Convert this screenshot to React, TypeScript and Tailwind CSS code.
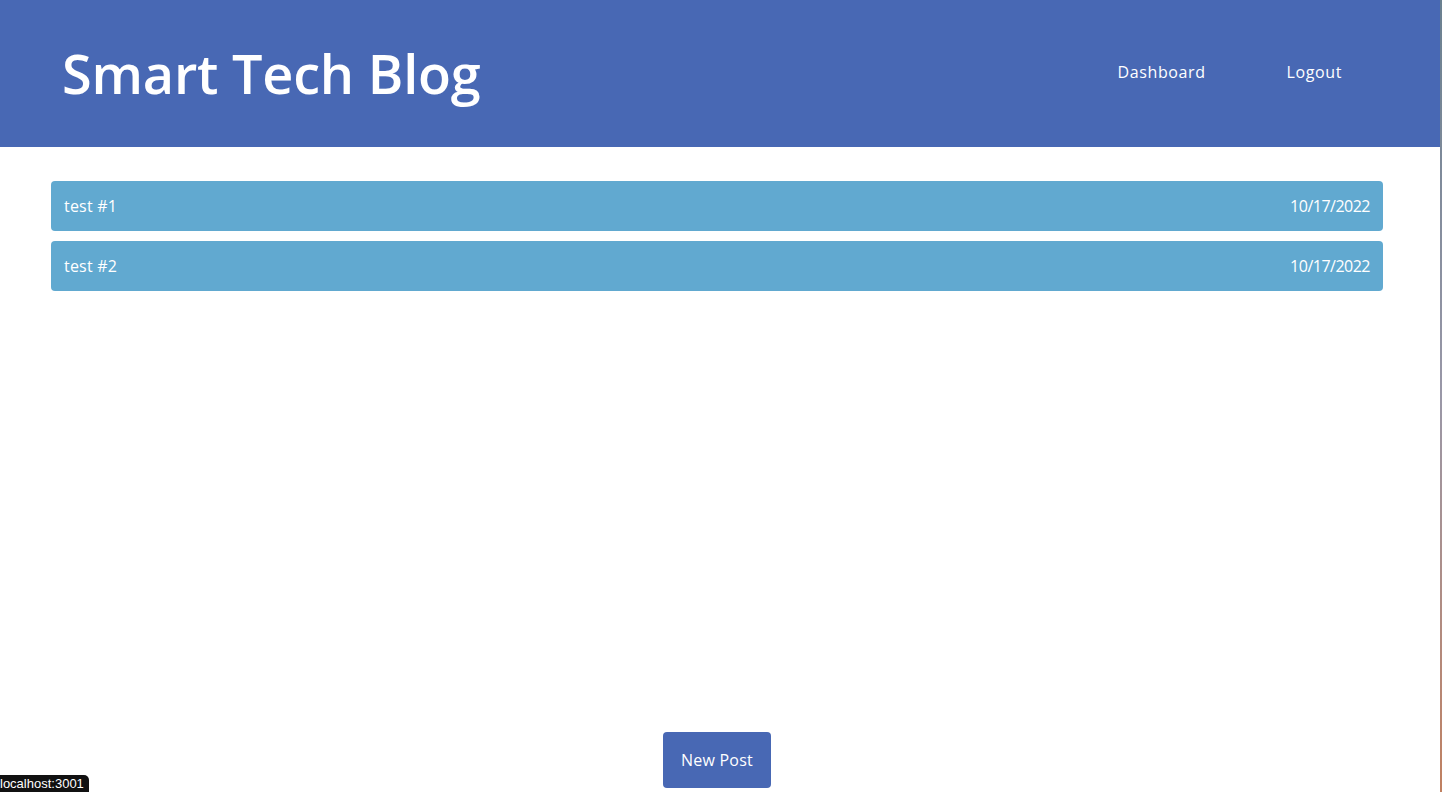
import React from "react";

const posts = [
  { title: "test #1", date: "10/17/2022" },
  { title: "test #2", date: "10/17/2022" },
];

export default function App() {
  return (
    <div
      className="relative flex h-[792px] w-[1442px] overflow-hidden bg-white"
      style={{ fontFamily: '"Open Sans", "Noto Sans", sans-serif' }}
    >
      <div className="flex w-[1440px] flex-col">
        <header className="flex h-[147px] items-center justify-between bg-[#4868b4] pl-[62px] pr-[98px] text-white">
          <h1 className="text-[54px] font-semibold leading-none tracking-[-0.2px] pb-[2px]">Smart Tech Blog</h1>
          <nav className="flex items-center gap-[81px] pb-[4px] text-[16px]">
            <a className="tracking-[0.6px]">Dashboard</a>
            <a className="tracking-[0.6px]">Logout</a>
          </nav>
        </header>
        <main className="flex flex-1 flex-col gap-[10px] pl-[51px] pt-[34px]">
          {posts.map((p) => (
            <div
              key={p.title}
              className="flex h-[50px] w-[1332px] items-center justify-between rounded-[4px] bg-[#61a9d0] px-[13px] text-[16px] text-white"
            >
              <span className="tracking-[0.2px]">{p.title}</span>
              <span className="tracking-[-0.5px]">{p.date}</span>
            </div>
          ))}
        </main>
        <div className="flex justify-center pb-[4px] pr-[6px]">
          <button className="h-[56px] w-[108px] rounded-[4px] bg-[#4868b4] text-[16px] text-white tracking-[0.2px]">
            New Post
          </button>
        </div>
      </div>
      <div className="h-full w-[2px] bg-gradient-to-b from-[#6a8090] via-[#9a98a8] to-[#c08060]" />
      <div
        className="absolute bottom-0 left-0 flex h-[17px] w-[89px] items-center rounded-tr-[5px] bg-[#111111] text-[13px] leading-none text-white"
        style={{ fontFamily: '"Liberation Sans", Arial, sans-serif' }}
      >
        localhost:3001
      </div>
    </div>
  );
}
